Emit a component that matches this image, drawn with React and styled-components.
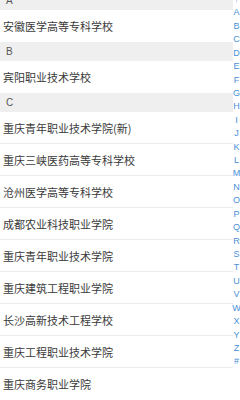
import styled, { createGlobalStyle } from "styled-components";

const GlobalStyle = createGlobalStyle`
  html, body {
    margin: 0;
    padding: 0;
    background: #fff;
    overflow: hidden;
  }
  body {
    font-family: "Noto Sans CJK SC", "Noto Sans", sans-serif;
  }
`;

const sections = [
  { letter: "A", schools: ["安徽医学高等专科学校"] },
  { letter: "B", schools: ["宾阳职业技术学校"] },
  {
    letter: "C",
    schools: [
      "重庆青年职业技术学院(新)",
      "重庆三峡医药高等专科学校",
      "沧州医学高等专科学校",
      "成都农业科技职业学院",
      "重庆青年职业技术学院",
      "重庆建筑工程职业学院",
      "长沙高新技术工程学校",
      "重庆工程职业技术学院",
      "重庆商务职业学院",
    ],
  },
];

const letters = ["↑", ..."ABCDEFGHIJKLMNOPQRSTUVWXYZ".split(""), "#"];

function App() {
  return (
    <>
      <GlobalStyle />
      <Page>
        <List>
          {sections.map((section) => (
            <section key={section.letter}>
              <Header>{section.letter}</Header>
              {section.schools.map((name, i) => (
                <Row key={name} last={i === section.schools.length - 1}>
                  {name}
                </Row>
              ))}
            </section>
          ))}
        </List>
        <Index>
          {letters.map((l) => (
            <IndexLetter key={l}>{l}</IndexLetter>
          ))}
        </Index>
      </Page>
    </>
  );
}

export default App;

const Page = styled.div`
  display: flex;
  width: 240px;
  height: 400px;
  overflow: hidden;
`;

const List = styled.div`
  flex: 1;
  margin-top: -9px;
  display: flex;
  flex-direction: column;
`;

const Header = styled.div`
  height: 19px;
  display: flex;
  align-items: center;
  padding-left: 6px;
  background: #efefef;
  color: #555;
  font-family: "Liberation Sans", Arial, sans-serif;
  font-size: 10px;
`;

const Row = styled.div`
  height: 31px;
  display: flex;
  align-items: center;
  padding-left: 3px;
  background: #fff;
  color: #3a3a3a;
  font-size: 11px;
  border-bottom: 1px solid ${(p) => (p.last ? "transparent" : "#ececec")};
`;

const Index = styled.div`
  width: 7px;
  margin-top: -7px;
  display: flex;
  flex-direction: column;
  align-items: center;
  background: #fff;
`;

const IndexLetter = styled.span`
  height: 13.43px;
  line-height: 13.43px;
  font-family: "Liberation Sans", Arial, sans-serif;
  font-size: 9px;
  color: #4a8fd8;
  white-space: nowrap;
`;
